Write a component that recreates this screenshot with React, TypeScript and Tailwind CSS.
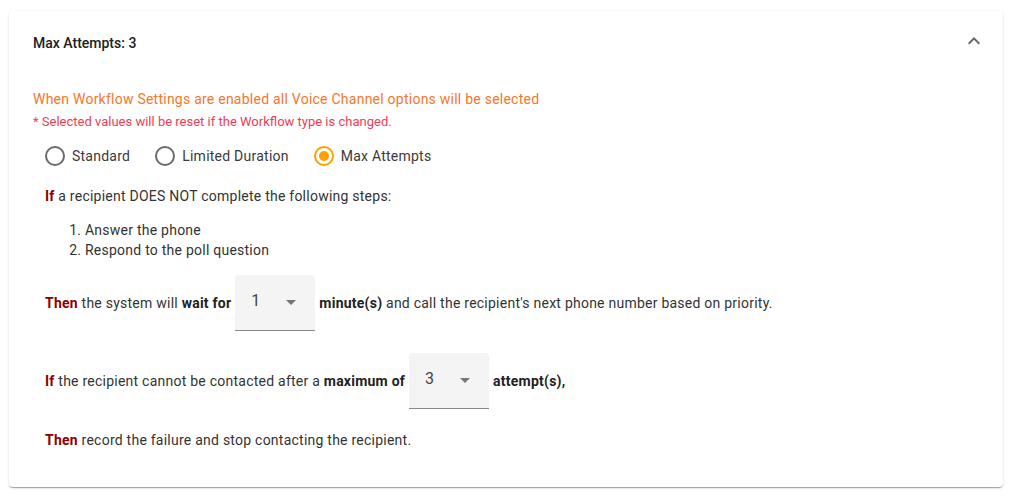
function RadioIcon({ checked }: { checked: boolean }) {
  return (
    <svg width="24" height="24" viewBox="0 0 24 24" className="shrink-0">
      <circle cx="12" cy="12" r="9" fill="none" stroke={checked ? "#ffa000" : "#6b6b6b"} strokeWidth="2" />
      {checked && <circle cx="12" cy="12" r="5" fill="#ffa000" />}
    </svg>
  );
}

function SelectBox({ value }: { value: string }) {
  return (
    <div className="mx-[4px] flex h-[56px] w-[80px] items-center justify-between rounded-t-[4px] border-b border-[#8a8a8a] bg-[#f4f4f4] pl-[16px] pr-[12px] text-[16px] tracking-normal text-[#444]">
      <span className="-mt-[3px]">{value}</span>
      <svg width="24" height="24" viewBox="0 0 24 24" className="-mt-[2px]">
        <path d="M7 10l5 5 5-5z" fill="#757575" />
      </svg>
    </div>
  );
}

const options = [
  { label: "Standard", checked: false },
  { label: "Limited Duration", checked: false },
  { label: "Max Attempts", checked: true },
];

export default function App() {
  return (
    <div className="min-h-[498px] bg-white pl-[9px] pr-[12px] pt-[11px] font-['Roboto',sans-serif] text-[14px] text-[#333]">
      <div className="rounded-[4px] bg-white shadow-[0_2px_1px_-1px_rgba(0,0,0,0.2),0_1px_1px_0_rgba(0,0,0,0.14),0_1px_3px_0_rgba(0,0,0,0.12)]">
        <div className="flex h-[64px] items-center justify-between pl-[24px] pr-[17px]">
          <span className="font-medium text-[#212121]">Max Attempts: 3</span>
          <svg width="24" height="24" viewBox="0 0 24 24" className="-mt-[4px]">
            <path d="M12 8l-6 6 1.41 1.41L12 10.83l4.59 4.58L18 14z" fill="#666" />
          </svg>
        </div>

        <div className="px-[24px] pb-[37px] pt-[14px] tracking-[0.24px]">
          <p className="leading-[20px] text-[#f7762a]">
            When Workflow Settings are enabled all Voice Channel options will be selected
          </p>
          <p className="mt-[5px] text-[13px] leading-[16px] tracking-normal text-[#ee3d55]">
            * Selected values will be reset if the Workflow type is changed.
          </p>

          <div className="mt-[12px] flex items-center gap-[23px] pl-[10px]">
            {options.map((o) => (
              <label key={o.label} className="flex h-[28px] items-center gap-[5px] text-[#3a3a3a]">
                <RadioIcon checked={o.checked} />
                <span>{o.label}</span>
              </label>
            ))}
          </div>

          <div className="pl-[12px]">
            <p className="mt-[16px] leading-[20px]">
              <b className="font-bold text-[#8b0000]">If</b> a recipient DOES NOT complete the following steps:
            </p>
            <ol className="mt-[14px] list-decimal pl-[40px] leading-[20px]">
              <li>Answer the phone</li>
              <li>Respond to the poll question</li>
            </ol>

            <div className="mt-[15px] flex items-center">
              <span>
                <b className="font-bold text-[#8b0000]">Then</b> the system will <b className="font-bold text-[#222]">wait for</b>
              </span>
              <SelectBox value="1" />
              <span>
                <b className="font-bold text-[#222]">minute(s)</b> and call the recipient's next phone number based on priority.
              </span>
            </div>

            <div className="mt-[22px] flex items-center">
              <span>
                <b className="font-bold text-[#8b0000]">If</b> the recipient cannot be contacted after a{" "}
                <b className="font-bold text-[#222]">maximum of</b>
              </span>
              <SelectBox value="3" />
              <span>
                <b className="font-bold text-[#222]">attempt(s),</b>
              </span>
            </div>

            <p className="mt-[21px] leading-[20px]">
              <b className="font-bold text-[#8b0000]">Then</b> record the failure and stop contacting the recipient.
            </p>
          </div>
        </div>
      </div>
    </div>
  );
}
